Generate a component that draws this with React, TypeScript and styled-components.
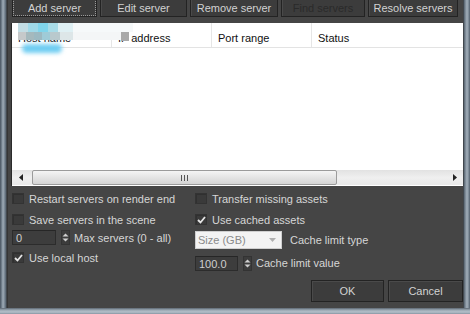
import React from "react";
import styled, { createGlobalStyle, css } from "styled-components";

const Global = createGlobalStyle`
  html, body { margin: 0; padding: 0; width: 470px; height: 314px; overflow: hidden; background: #454545; }
  * { box-sizing: border-box; }
  #root { width: 470px; height: 314px; }
`;

const Window = styled.div`
  width: 470px;
  height: 314px;
  display: grid;
  grid-template-columns: 8px 1fr 7px;
  grid-template-rows: 1fr 6px;
  font-family: "Liberation Sans", Arial, sans-serif;
  font-size: 11px;
  color: #d6d6d6;
  overflow: hidden;
`;

const SideFrame = styled.div<{ $right?: boolean }>`
  background: ${(p) =>
    p.$right
      ? "linear-gradient(to right, #2e2e2e 0, #56626e 1px, #8d9aa6 3px, #a3afba 4px, #74828f 6px, #4e5a66 7px)"
      : "linear-gradient(to right, #46525e 0, #7b8996 2px, #a0adb8 3px, #6f7d8a 5px, #56626e 6px, #303030 7px, #3a3a3a 8px)"};
`;

const BottomFrame = styled.div`
  grid-column: 1 / 4;
  background: linear-gradient(to bottom, #5c6671 0, #9aa7b2 2px, #b4c0ca 4px, #8795a2 6px);
`;

const Dialog = styled.div`
  background: #454545;
  display: flex;
  flex-direction: column;
  padding: 0 0 6px 0;
  min-width: 0;
`;

const Toolbar = styled.div`
  display: flex;
  margin-top: -4px;
  padding-left: 4px;
  height: 21px;
`;

const buttonBase = css`
  height: 100%;
  background: #3c3c3c;
  border: 1px solid #232323;
  box-shadow: inset 1px 1px 0 #4a4a4a;
  font-family: "Liberation Sans", Arial, sans-serif;
  font-size: 11px;
  color: #d2d2d2;
  display: flex;
  align-items: center;
  justify-content: center;
  padding: 0;
`;

const ToolButton = styled.div<{ $w: number; $gap: number; $disabled?: boolean; $focus?: boolean }>`
  ${buttonBase};
  width: ${(p) => p.$w}px;
  margin-right: ${(p) => p.$gap}px;
  padding-top: 3px;
  color: ${(p) => (p.$disabled ? "#2a2a2a" : "#d2d2d2")};
  ${(p) =>
    p.$focus &&
    css`
      outline: 1px dotted #9a9a9a;
      outline-offset: -2px;
    `}
`;

const ListBox = styled.div`
  position: relative;
  margin: 6px 0 0 3px;
  height: 163px;
  background: #ffffff;
  border-left: 1px solid #2a2a2a;
  display: flex;
  flex-direction: column;
  overflow: hidden;
`;

const HeaderRow = styled.div`
  display: flex;
  height: 25px;
  border-bottom: 1px solid #e3e3e3;
  color: #111;
`;

const HeaderCell = styled.div<{ $w?: number }>`
  ${(p) => (p.$w ? `width: ${p.$w}px;` : "flex: 1;")}
  padding: 9px 0 0 6px;
  border-right: 1px solid #e6e6e6;
  white-space: nowrap;
  &:last-child { border-right: none; }
`;

const ListBody = styled.div`
  flex: 1;
`;

const HScroll = styled.div`
  height: 15px;
  margin-bottom: 1px;
  background: linear-gradient(to bottom, #e2e2e2, #efefef 50%, #e9e9e9);
  display: flex;
  align-items: stretch;
`;

const ScrollArrow = styled.div`
  width: 17px;
  display: flex;
  align-items: center;
  justify-content: center;
`;

const Thumb = styled.div`
  margin-left: 3px;
  width: 305px;
  border: 1px solid #9b9b9b;
  border-radius: 2px;
  background: linear-gradient(to bottom, #f4f4f4, #e4e4e4 50%, #d4d4d4);
  display: flex;
  align-items: center;
  justify-content: center;
`;

const Grip = styled.div`
  display: flex;
  gap: 2px;
  & > span {
    width: 1px;
    height: 6px;
    background: #555;
  }
`;

const TrackRest = styled.div`
  flex: 1;
`;

const Censor = styled.div`
  position: absolute;
  left: 0;
  top: 0;
  width: 130px;
  height: 32px;
  pointer-events: none;
`;

const Block = styled.div`
  position: absolute;
`;

const Options = styled.div`
  display: flex;
  margin-top: 2px;
  padding-left: 4px;
`;

const Column = styled.div<{ $w: number }>`
  width: ${(p) => p.$w}px;
  display: flex;
  flex-direction: column;
`;

const Row = styled.div<{ $h: number }>`
  height: ${(p) => p.$h}px;
  display: flex;
  align-items: center;
  white-space: nowrap;
`;

const Box = styled.div`
  width: 12px;
  height: 11px;
  background: #3a3a3a;
  border: 1px solid #333;
  box-shadow: inset 1px 1px 0 #303030;
  margin-right: 5px;
  display: flex;
  align-items: center;
  justify-content: center;
`;

const NumInput = styled.div<{ $w: number }>`
  width: ${(p) => p.$w}px;
  height: 15px;
  background: #3d3d3d;
  border: 1px solid #2c2c2c;
  border-top-color: #262626;
  color: #cfcfcf;
  padding: 1px 0 0 3px;
  line-height: 12px;
`;

const Spin = styled.div`
  width: 9px;
  height: 15px;
  margin: 0 4px 0 5px;
  display: flex;
  flex-direction: column;
  justify-content: center;
  gap: 1px;
  background: #3c3c3c;
  border: 1px solid #333;
`;

const Select = styled.div`
  width: 87px;
  height: 18px;
  background: #f3f3f3;
  border: 1px solid #cfcfcf;
  color: #8a8a8a;
  display: flex;
  align-items: center;
  justify-content: space-between;
  padding: 1px 5px 0 2px;
  margin-right: 8px;
`;

const Footer = styled.div`
  margin-top: auto;
  display: flex;
  justify-content: flex-end;
  gap: 4px;
  height: 22px;
`;

const DlgButton = styled.div<{ $w: number }>`
  ${buttonBase};
  width: ${(p) => p.$w}px;
`;

const Check = () => (
  <svg width="9" height="8" viewBox="0 0 9 8">
    <path d="M1 4 L3.5 6.5 L8 1" stroke="#e6e6e6" strokeWidth="1.8" fill="none" />
  </svg>
);

const Checkbox: React.FC<{ checked?: boolean; label: string }> = ({ checked, label }) => (
  <>
    <Box>{checked && <Check />}</Box>
    <span>{label}</span>
  </>
);

const SpinArrows = () => (
  <Spin>
    <svg width="7" height="4" viewBox="0 0 7 4">
      <path d="M0.5 3.5 L3.5 0.5 L6.5 3.5Z" fill="#cfcfcf" />
    </svg>
    <svg width="7" height="4" viewBox="0 0 7 4">
      <path d="M0.5 0.5 L3.5 3.5 L6.5 0.5Z" fill="#cfcfcf" />
    </svg>
  </Spin>
);

const censorBlocks: [number, number, number, number, string][] = [
  [6, 0, 10, 9, "#c2dde4"],
  [16, 0, 10, 9, "#9fd9e8"],
  [26, 0, 10, 9, "#80d5eb"],
  [36, 0, 10, 9, "#a9dce8"],
  [46, 0, 15, 9, "#dff0f4"],
  [61, 0, 60, 9, "#f6f9fa"],
  [6, 9, 8, 8, "#c6c9ca"],
  [14, 9, 8, 8, "#a5b9bd"],
  [22, 9, 8, 8, "#9cb9c1"],
  [30, 9, 8, 8, "#9fcbd7"],
  [38, 9, 10, 8, "#b9c9cd"],
  [48, 9, 13, 8, "#dde6e8"],
  [61, 9, 48, 8, "#f4f6f7"],
  [109, 9, 8, 9, "#a9a9a9"],
];

export default function App() {
  return (
    <>
      <Global />
      <Window>
        <SideFrame />
        <Dialog>
          <Toolbar>
            <ToolButton $w={85} $gap={3} $focus>Add server</ToolButton>
            <ToolButton $w={87} $gap={3}>Edit server</ToolButton>
            <ToolButton $w={88} $gap={3}>Remove server</ToolButton>
            <ToolButton $w={84} $gap={3} $disabled>Find servers</ToolButton>
            <ToolButton $w={90} $gap={0}>Resolve servers</ToolButton>
          </Toolbar>
          <ListBox>
            <HeaderRow>
              <HeaderCell $w={100}>Host name</HeaderCell>
              <HeaderCell $w={100}>IP address</HeaderCell>
              <HeaderCell $w={100}>Port range</HeaderCell>
              <HeaderCell>Status</HeaderCell>
            </HeaderRow>
            <ListBody />
            <HScroll>
              <ScrollArrow>
                <svg width="4" height="7" viewBox="0 0 4 7">
                  <path d="M4 0 L0 3.5 L4 7Z" fill="#222" />
                </svg>
              </ScrollArrow>
              <Thumb>
                <Grip>
                  <span />
                  <span />
                  <span />
                </Grip>
              </Thumb>
              <TrackRest />
              <ScrollArrow>
                <svg width="4" height="7" viewBox="0 0 4 7">
                  <path d="M0 0 L4 3.5 L0 7Z" fill="#222" />
                </svg>
              </ScrollArrow>
            </HScroll>
            <Censor>
              {censorBlocks.map(([x, y, w, h, c], i) => (
                <Block
                  key={i}
                  style={{ left: x, top: y, width: w, height: h, background: c }}
                />
              ))}
              <Block
                style={{
                  left: 10,
                  top: 21,
                  width: 40,
                  height: 9,
                  borderRadius: 6,
                  background: "#6fcdf2",
                  filter: "blur(2px)",
                }}
              />
            </Censor>
          </ListBox>
          <Options>
            <Column $w={183}>
              <Row $h={21}>
                <Checkbox label="Restart servers on render end" />
              </Row>
              <Row $h={21}>
                <Checkbox label="Save servers in the scene" />
              </Row>
              <Row $h={15}>
                <NumInput $w={44}>0</NumInput>
                <SpinArrows />
                <span>Max servers (0 - all)</span>
              </Row>
              <Row $h={25}>
                <Checkbox checked label="Use local host" />
              </Row>
            </Column>
            <Column $w={260}>
              <Row $h={21}>
                <Checkbox label="Transfer missing assets" />
              </Row>
              <Row $h={21}>
                <Checkbox checked label="Use cached assets" />
              </Row>
              <Row $h={19}>
                <Select>
                  <span>Size (GB)</span>
                  <svg width="7" height="4" viewBox="0 0 7 4">
                    <path d="M0 0 L7 0 L3.5 4Z" fill="#b0b0b0" />
                  </svg>
                </Select>
                <span>Cache limit type</span>
              </Row>
              <Row $h={28}>
                <NumInput $w={43}>100.0</NumInput>
                <SpinArrows />
                <span>Cache limit value</span>
              </Row>
            </Column>
          </Options>
          <Footer>
            <DlgButton $w={73}>OK</DlgButton>
            <DlgButton $w={75}>Cancel</DlgButton>
          </Footer>
        </Dialog>
        <SideFrame $right />
        <BottomFrame />
      </Window>
    </>
  );
}
